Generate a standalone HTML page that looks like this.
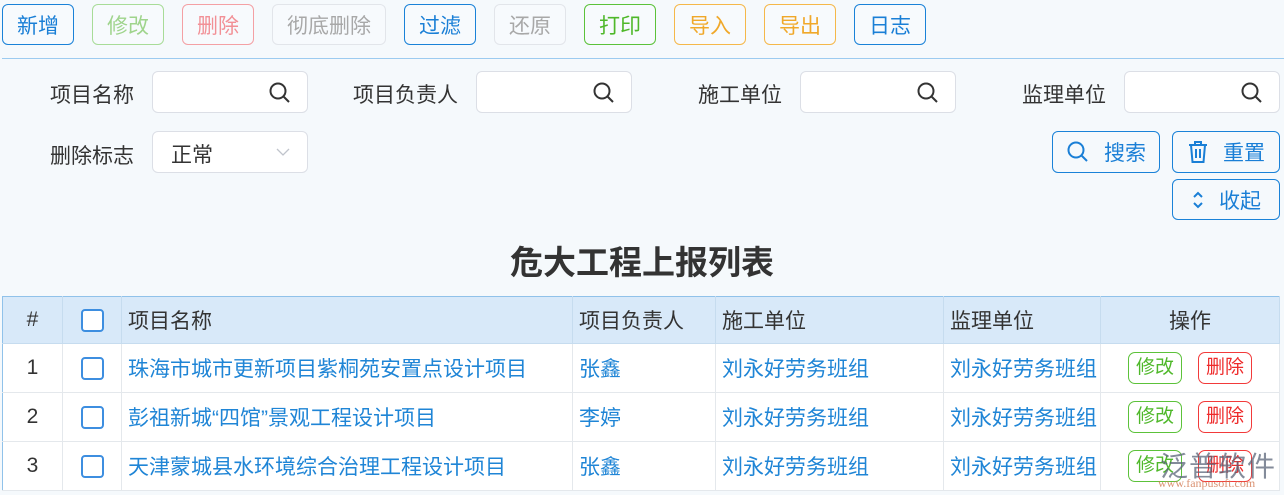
<!DOCTYPE html>
<html><head><meta charset="utf-8"><style>
*{box-sizing:border-box;margin:0;padding:0}
body{width:1284px;height:495px;overflow:hidden;background:#f5f9fc;font-family:"Liberation Sans","Noto Sans CJK SC",sans-serif;position:relative;color:#333}
.a{position:absolute}
.b{position:absolute;top:4px;height:41px;border:1px solid;border-radius:6px;font-size:21px;display:flex;align-items:center;justify-content:center;background:#f7fafd}
.lbl{position:absolute;font-size:21px;color:#333}
.in{position:absolute;width:156px;height:42px;background:#fff;border:1px solid #dcdfe6;border-radius:6px}
.in svg{position:absolute;right:15px;top:9px}
.sb{position:absolute;border:1px solid #1a82d8;border-radius:6px;color:#1a7fd6;font-size:21px;display:flex;align-items:center;justify-content:center;gap:14px}
table{position:absolute;left:2px;top:296px;width:1278px;border-collapse:collapse;font-size:21px;border:1px solid #90c2ea;border-bottom:none;table-layout:fixed}
th{background:#d8e9f9;height:47px;font-weight:normal;text-align:left;padding-left:6px;color:#333;border-right:1px solid #c6dcef;border-bottom:1px solid #c6dcef}
td{height:49px;background:#fff;border-right:1px solid #e4e8ec;border-bottom:1px solid #e4e8ec;padding-left:6px;color:#1f85d6;white-space:nowrap;overflow:hidden}
.c{text-align:center;padding-left:0;color:#333}
.cb{display:inline-block;width:23px;height:23px;border:2px solid #3d8ee0;border-radius:4px;vertical-align:middle;background:#fff}
.rb{display:inline-block;width:54px;height:32px;border:1px solid;border-radius:7px;font-size:19px;line-height:30px;text-align:center;margin:0 8px}
</style></head><body>
<div class="b" style="left:2px;width:72px;border-color:#1a82d8;color:#1a7fd6">新增</div>
<div class="b" style="left:92px;width:72px;border-color:#a8dc98;color:#9fd48c">修改</div>
<div class="b" style="left:182px;width:72px;border-color:#f4a0a4;color:#f29096">删除</div>
<div class="b" style="left:272px;width:114px;border-color:#e2e5ea;color:#a8a8a8">彻底删除</div>
<div class="b" style="left:404px;width:72px;border-color:#1a82d8;color:#1a7fd6">过滤</div>
<div class="b" style="left:494px;width:72px;border-color:#e2e5ea;color:#a8a8a8">还原</div>
<div class="b" style="left:584px;width:72px;border-color:#5cc23a;color:#4fb82a">打印</div>
<div class="b" style="left:674px;width:72px;border-color:#f5b84a;color:#f0a82a">导入</div>
<div class="b" style="left:764px;width:72px;border-color:#f5b84a;color:#f0a82a">导出</div>
<div class="b" style="left:854px;width:72px;border-color:#1a82d8;color:#1a7fd6">日志</div>
<div class="a" style="left:2px;top:58px;width:1282px;height:1px;background:#9ccbf0"></div>

<div class="lbl" style="left:50px;top:79px">项目名称</div>
<div class="in" style="left:152px;top:71px"><svg width="24" height="24" viewBox="0 0 24 24" fill="none" stroke="#333" stroke-width="2"><circle cx="10" cy="10" r="7.5"/><path d="M15.5 15.5 21 21"/></svg></div>
<div class="lbl" style="left:353px;top:79px">项目负责人</div>
<div class="in" style="left:476px;top:71px"><svg width="24" height="24" viewBox="0 0 24 24" fill="none" stroke="#333" stroke-width="2"><circle cx="10" cy="10" r="7.5"/><path d="M15.5 15.5 21 21"/></svg></div>
<div class="lbl" style="left:698px;top:79px">施工单位</div>
<div class="in" style="left:800px;top:71px"><svg width="24" height="24" viewBox="0 0 24 24" fill="none" stroke="#333" stroke-width="2"><circle cx="10" cy="10" r="7.5"/><path d="M15.5 15.5 21 21"/></svg></div>
<div class="lbl" style="left:1022px;top:79px">监理单位</div>
<div class="in" style="left:1124px;top:71px"><svg width="24" height="24" viewBox="0 0 24 24" fill="none" stroke="#333" stroke-width="2"><circle cx="10" cy="10" r="7.5"/><path d="M15.5 15.5 21 21"/></svg></div>
<div class="lbl" style="left:50px;top:140px">删除标志</div>
<div class="in" style="left:152px;top:131px"><span style="position:absolute;left:18px;top:7px;font-size:21px;color:#333">正常</span><svg style="right:16px;top:14px" width="16" height="12" viewBox="0 0 16 12" fill="none" stroke="#c0c4cc" stroke-width="1.3"><path d="M2 3l6 6 6-6"/></svg></div>

<div class="sb" style="left:1052px;top:131px;width:108px;height:42px"><svg width="24" height="24" viewBox="0 0 24 24" fill="none" stroke="#1a7fd6" stroke-width="2"><circle cx="10" cy="10" r="7.5"/><path d="M15.5 15.5 21 21"/></svg>搜索</div>
<div class="sb" style="left:1172px;top:131px;width:108px;height:42px"><svg width="22" height="24" viewBox="0 0 22 24" fill="none" stroke="#1a7fd6" stroke-width="2"><path d="M2 5h18M8 5V2h6v3M4 5l1.5 17h11L18 5M9 9v9M13 9v9"/></svg>重置</div>
<div class="sb" style="left:1172px;top:179px;width:108px;height:41px"><svg width="14" height="20" viewBox="0 0 14 20" fill="none" stroke="#1a7fd6" stroke-width="2"><path d="M3 7l4-4 4 4M3 13l4 4 4-4"/></svg>收起</div>

<div class="a" style="left:0;width:1284px;top:236px;text-align:center;font-size:33px;font-weight:bold;color:#333">危大工程上报列表</div>

<table>
<colgroup><col style="width:60px"><col style="width:59px"><col style="width:451px"><col style="width:143px"><col style="width:228px"><col style="width:157px"><col></colgroup>
<tr><th class="c">#</th><th class="c"><span class="cb"></span></th><th>项目名称</th><th>项目负责人</th><th>施工单位</th><th>监理单位</th><th class="c" style="border-left:1px solid #c6dcef">操作</th></tr>
<tr><td class="c">1</td><td class="c"><span class="cb"></span></td><td>珠海市城市更新项目紫桐苑安置点设计项目</td><td>张鑫</td><td>刘永好劳务班组</td><td>刘永好劳务班组</td><td class="c"><span class="rb" style="border-color:#5cc23a;color:#4fb82a">修改</span><span class="rb" style="border-color:#f23a3a;color:#ee2a2a">删除</span></td></tr>
<tr><td class="c">2</td><td class="c"><span class="cb"></span></td><td>彭祖新城“四馆”景观工程设计项目</td><td>李婷</td><td>刘永好劳务班组</td><td>刘永好劳务班组</td><td class="c"><span class="rb" style="border-color:#5cc23a;color:#4fb82a">修改</span><span class="rb" style="border-color:#f23a3a;color:#ee2a2a">删除</span></td></tr>
<tr><td class="c">3</td><td class="c"><span class="cb"></span></td><td>天津蒙城县水环境综合治理工程设计项目</td><td>张鑫</td><td>刘永好劳务班组</td><td>刘永好劳务班组</td><td class="c"><span class="rb" style="border-color:#5cc23a;color:#4fb82a">修改</span><span class="rb" style="border-color:#f23a3a;color:#ee2a2a">删除</span></td></tr>
</table>
<div class="a" style="left:1160px;top:445px;font-size:28px;color:rgba(90,100,120,.75);letter-spacing:1px">泛普软件</div>
<div class="a" style="left:1158px;top:476px;font-size:12px;color:rgba(210,120,80,.8);font-family:'Liberation Serif',serif">www.fanpusoft.com</div>
</body></html>
